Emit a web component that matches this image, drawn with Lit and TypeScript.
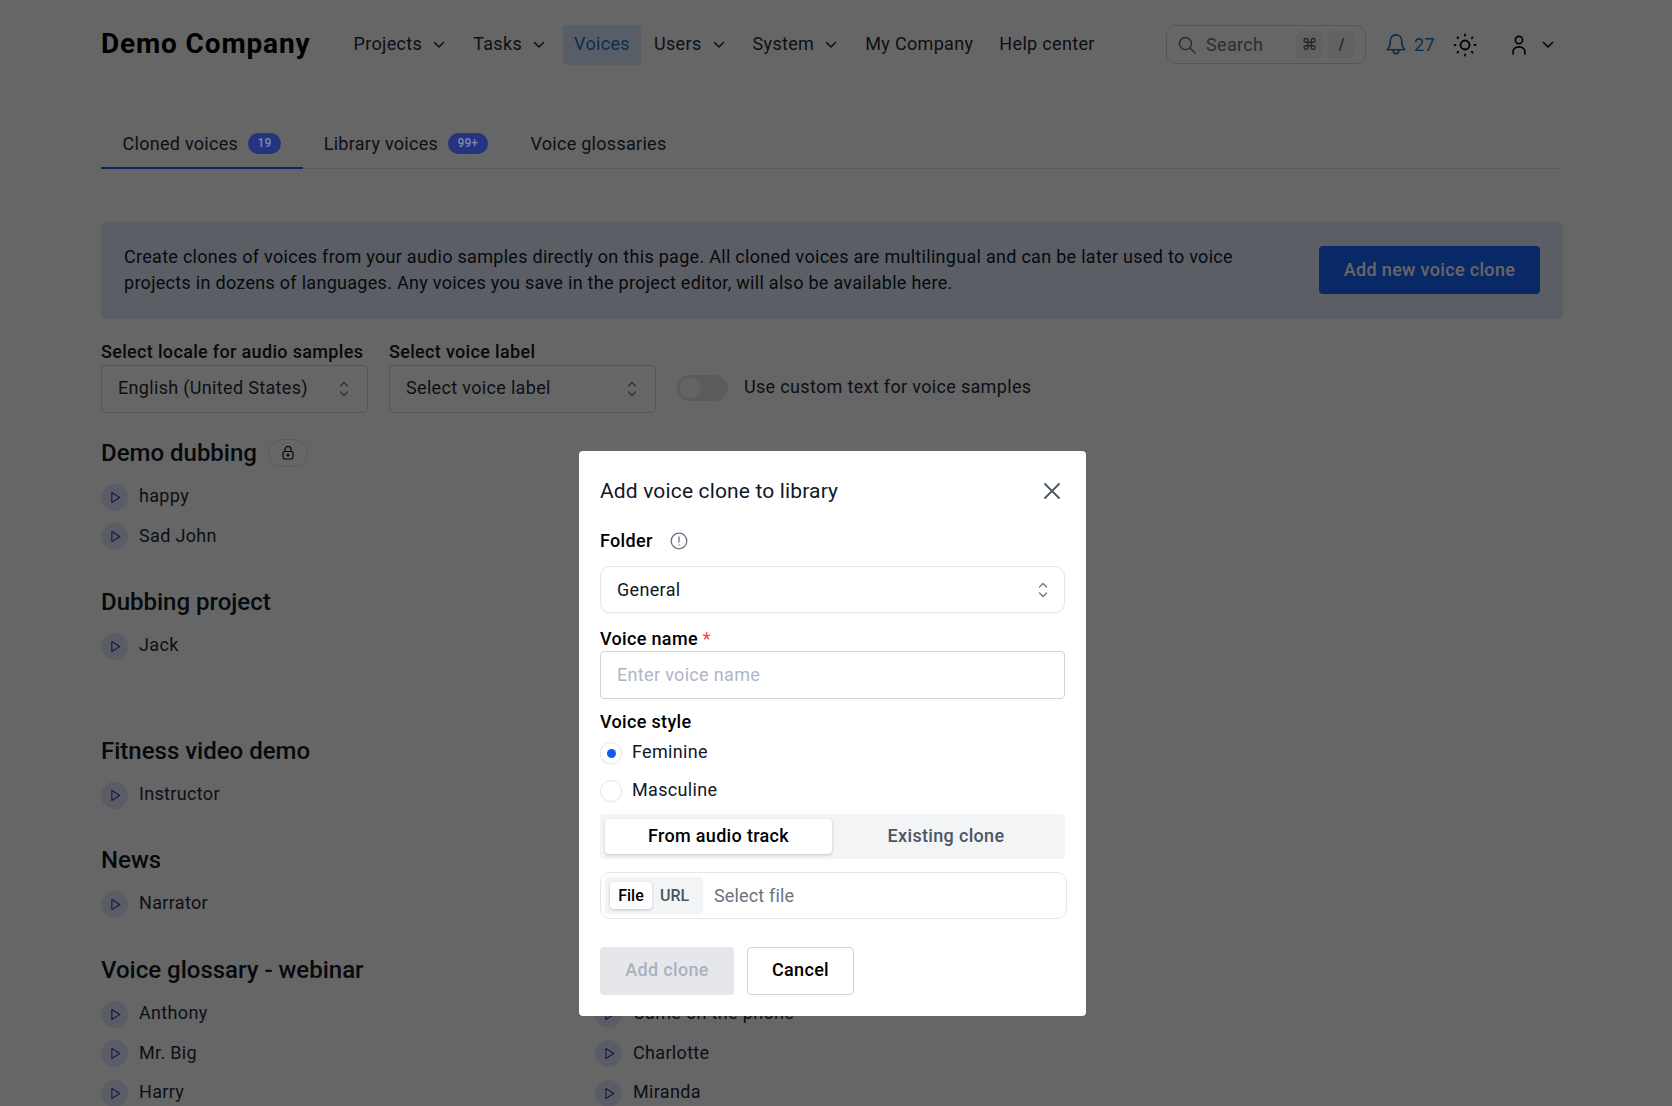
import { LitElement, css, html, svg } from 'lit';
import { customElement } from 'lit/decorators.js';

const chevron = html`<svg class="chev" viewBox="0 0 12 8" fill="none" stroke="currentColor" stroke-width="1.5" stroke-linecap="round" stroke-linejoin="round"><path d="M1.5 1.5 6 6l4.5-4.5"/></svg>`;
const updown = html`<svg class="updown" viewBox="0 0 10 18" fill="none" stroke="currentColor" stroke-width="1.2" stroke-linecap="round" stroke-linejoin="round"><path d="M1.5 6 5 2.5 8.500 6M1.500 12 5 15.500 8.500 12"/></svg>`;
const play = svg`<path d="M1 1v12l9.500-6z" fill="none" stroke="currentColor" stroke-width="1.300" stroke-linejoin="round"/>`;

const sections = [
  { title: 'Demo dubbing', lock: true, cols: [['happy', 'Sad John']] },
  { title: 'Dubbing project', tall: true, cols: [['Jack']] },
  { title: 'Fitness video demo', cols: [['Instructor']] },
  { title: 'News', cols: [['Narrator']] },
  {
    title: 'Voice glossary - webinar',
    cols: [
      ['Anthony', 'Mr. Big', 'Harry'],
      ['Came on the phone', 'Charlotte', 'Miranda'],
    ],
  },
];

@customElement('app-root')
export class AppRoot extends LitElement {
  static styles = css`
    :host {
      display: block;
      position: relative;
      height: 1106px;
      overflow: hidden;
      background: #fff;
      font-family: Roboto, 'Liberation Sans', sans-serif;
      font-size: 18px;
      letter-spacing: 0.33px;
      color: #111827;
    }
    header {
      height: 86px;
      box-sizing: border-box;
      border-bottom: 1px solid #f3f4f6;
      padding: 4px 118px 0 101px;
      display: flex;
      align-items: center;
    }
    .logo {
      font-size: 28px;
      font-weight: 700;
      letter-spacing: 0.85px;
      color: #000;
      width: 242px;
      flex: none;
      white-space: nowrap;
      margin-bottom: 2px;
    }
    nav {
      display: flex;
      align-items: center;
      gap: 3px;
      flex: 1;
      color: #1f2937;
    }
    .nav-item {
      height: 40px;
      padding: 0 10.5px 2px;
      box-sizing: border-box;
      display: flex;
      align-items: center;
      gap: 11px;
      border-radius: 4px;
      white-space: nowrap;
    }
    .nav-item.more {
      padding-right: 14.5px;
    }
    .nav-item.more .chev {
      margin-top: 3px;
    }
    .nav-item.active {
      background: #dbeafe;
      color: #1d6fc4;
      padding-left: 11.5px;
      padding-right: 11.5px;
      margin-right: -1px;
    }
    .nav-item.wide {
      padding-right: 12.5px;
    }
    .chev {
      width: 12px;
      height: 8px;
    }
    .tools {
      display: flex;
      align-items: center;
    }
    .search {
      width: 200px;
      height: 39px;
      box-sizing: border-box;
      border: 1px solid #d1d5db;
      border-radius: 10px;
      display: flex;
      align-items: center;
      padding: 0 10px 0 11px;
      color: #6b7280;
    }
    .search svg {
      width: 18px;
      height: 18px;
      margin-right: 10px;
    }
    .search span.ph {
      flex: 1;
    }
    kbd {
      width: 27px;
      height: 27px;
      margin-left: 5px;
      border-radius: 6px;
      background: #f3f4f6;
      display: flex;
      align-items: center;
      justify-content: center;
      font: 16px 'DejaVu Sans', sans-serif;
      color: #4b5563;
    }
    .bell {
      display: flex;
      align-items: center;
      gap: 8px;
      margin-left: 20px;
      color: #1d6fc4;
    }
    .bell svg {
      width: 20px;
      height: 23px;
    }
    .sun {
      width: 24px;
      height: 24px;
      margin-left: 18px;
      color: #000;
    }
    .user {
      width: 16px;
      height: 20px;
      margin-left: 34px;
      color: #000;
    }
    .tools .chev {
      margin-left: 15px;
      color: #000;
    }

    main {
      padding: 0 109px 0 101px;
    }
    .tabs {
      display: flex;
      height: 82px;
      align-items: flex-end;
      border-bottom: 1px solid #e5e7eb;
    }
    .tab {
      height: 48px;
      padding: 12px 21.5px 0;
      box-sizing: border-box;
      display: flex;
      align-items: flex-start;
      gap: 9.5px;
      color: #1f2937;
      margin-bottom: -1px;
      white-space: nowrap;
      letter-spacing: 0.28px;
    }
    .tab + .tab {
      padding-left: 21px;
    }
    .tab.active {
      border-bottom: 2px solid #1864ff;
    }
    /* the counters sit above the dimming layer in the reference */
    .badge {
      position: relative;
      z-index: 2;
      height: 21px;
      margin-top: 0;
      padding: 0 10px;
      border-radius: 10.5px;
      background: #24347f;
      color: #7f8bb0;
      font-size: 12px;
      font-weight: 500;
      letter-spacing: 0;
      line-height: 21px;
    }
    .banner {
      margin-top: 53px;
      height: 97px;
      box-sizing: border-box;
      background: #e4ecfa;
      border-radius: 4px;
      padding: 0 23px 1px;
      display: flex;
      align-items: center;
      justify-content: space-between;
      line-height: 26px;
      color: #111827;
      letter-spacing: 0.29px;
    }
    .banner p {
      margin: 0;
      width: 1130px;
    }
    .primary {
      width: 221px;
      height: 48px;
      flex: none;
      background: #1864ff;
      color: #fff;
      font-weight: 500;
      letter-spacing: 0.33px;
      border-radius: 4px;
      display: flex;
      align-items: center;
      justify-content: center;
    }
    .filters {
      display: flex;
      align-items: flex-end;
      gap: 21px;
      margin-top: 22px;
    }
    .field-label {
      font-weight: 500;
      line-height: 21px;
    }
    .select {
      width: 267px;
      height: 48px;
      margin-top: 3px;
      box-sizing: border-box;
      border: 1px solid #d1d5db;
      border-radius: 4px;
      padding: 0 18px 0 16px;
      display: flex;
      align-items: center;
      justify-content: space-between;
      color: #1f2937;
    }
    .select span {
      margin-bottom: 3px;
    }
    .updown {
      width: 10px;
      height: 18px;
      color: #6b7280;
    }
    .toggle-row {
      display: flex;
      align-items: center;
      gap: 16px;
      height: 50px;
      color: #1f2937;
    }
    .toggle-row span.label {
      margin-bottom: 3px;
    }
    .toggle {
      width: 51px;
      height: 26px;
      border-radius: 13px;
      background: #e5e7eb;
      position: relative;
    }
    .toggle::after {
      content: '';
      position: absolute;
      left: 3px;
      top: 3px;
      width: 20px;
      height: 20px;
      border-radius: 50%;
      background: #f9fafb;
    }

    section {
      margin-top: 22px;
      height: 128px;
    }
    section + section {
      margin-top: 21px;
    }
    section:last-child {
      margin-top: 22px;
    }
    section.one {
      height: 88px;
    }
    section h2 {
      margin: 0;
      font-size: 24px;
      font-weight: 500;
      letter-spacing: 0;
      line-height: 36px;
      color: #111827;
      display: flex;
      align-items: center;
      gap: 11px;
    }
    .lock {
      width: 40px;
      height: 28px;
      box-sizing: border-box;
      border: 1px solid #e5e7eb;
      border-radius: 14px;
      display: flex;
      align-items: center;
      justify-content: center;
      color: #000;
    }
    .lock svg {
      width: 12px;
      height: 14px;
    }
    .cols {
      display: grid;
      grid-template-columns: repeat(3, 494px);
      margin-top: 6.5px;
    }
    .row {
      height: 39.5px;
      display: flex;
      align-items: center;
      gap: 11px;
      color: #1f2937;
      white-space: nowrap;
    }
    .row .name {
      margin-bottom: 3px;
    }
    .play {
      width: 27px;
      height: 27px;
      border-radius: 50%;
      background: #e0e7ff;
      color: #2541b2;
      display: flex;
      align-items: center;
      justify-content: center;
      flex: none;
    }
    .play svg {
      width: 10px;
      height: 13px;
      margin-left: 2px;
    }

    .overlay {
      position: absolute;
      z-index: 1;
      inset: 0;
      background: rgba(0, 0, 0, 0.6);
    }
    .modal {
      position: absolute;
      z-index: 3;
      left: 579px;
      top: 451px;
      width: 507px;
      height: 565px;
      box-sizing: border-box;
      background: #fff;
      border-radius: 4px;
      padding: 22px 21px 21px;
      color: #111827;
    }
    .modal-head {
      display: flex;
      justify-content: space-between;
      align-items: center;
      height: 36px;
    }
    .modal-head span {
      font-size: 21px;
      letter-spacing: 0.15px;
    }
    .modal-head svg {
      width: 18px;
      height: 18px;
      margin-right: 4px;
      color: #4b5563;
    }
    .folder {
      display: flex;
      align-items: center;
      gap: 17px;
      margin-top: 19px;
      height: 24px;
      font-weight: 500;
      color: #000;
    }
    .folder svg {
      width: 18px;
      height: 18px;
      margin-top: 2px;
      color: #6b7280;
    }
    .m-select {
      margin-top: 14px;
      height: 47px;
      box-sizing: border-box;
      border: 1px solid #e5e7eb;
      border-radius: 10px;
      box-shadow: 0 1px 2px rgba(0, 0, 0, 0.05);
      padding: 0 16px;
      display: flex;
      align-items: center;
      justify-content: space-between;
    }
    .m-label {
      font-weight: 500;
      color: #000;
      line-height: 24px;
    }
    .m-label b {
      color: #ef4444;
      font-weight: 400;
    }
    .m-label.name {
      margin-top: 14px;
    }
    .m-input {
      height: 48px;
      box-sizing: border-box;
      border: 1px solid #cbd5e1;
      border-radius: 4px;
      padding: 0 16px 2px;
      display: flex;
      align-items: center;
      color: #aeb6c4;
    }
    .m-label.style {
      margin-top: 11px;
      margin-bottom: -1px;
    }
    .radio {
      display: flex;
      align-items: center;
      gap: 10px;
      height: 38px;
    }
    .radio span:last-child {
      margin-bottom: 2px;
    }
    .dot {
      width: 22px;
      height: 22px;
      margin-top: 2px;
      box-sizing: border-box;
      border: 1px solid #e5e7eb;
      border-radius: 50%;
      display: flex;
      align-items: center;
      justify-content: center;
      box-shadow: 0 1px 2px rgba(0, 0, 0, 0.05);
    }
    .dot.on::after {
      content: '';
      width: 9px;
      height: 9px;
      border-radius: 50%;
      background: #0f5ef0;
    }
    .seg {
      margin-top: 5px;
      height: 45px;
      box-sizing: border-box;
      background: #f3f4f6;
      border-radius: 4px;
      padding: 5px;
      display: grid;
      grid-template-columns: 227px 1fr;
      text-align: center;
      font-weight: 500;
      line-height: 34px;
      color: #4b5563;
    }
    .seg .on {
      background: #fff;
      color: #000;
      border-radius: 4px;
      box-shadow: 0 1px 3px rgba(0, 0, 0, 0.2);
    }
    .file {
      margin-top: 13px;
      width: 467px;
      height: 47px;
      box-sizing: border-box;
      border: 1px solid #e5e7eb;
      border-radius: 10px;
      padding: 4px;
      display: flex;
      align-items: center;
      gap: 11px;
      color: #6b7280;
      letter-spacing: 0.15px;
    }
    .file-seg {
      height: 37px;
      width: 98px;
      box-sizing: border-box;
      background: #f3f4f6;
      border-radius: 4px;
      padding: 5px;
      display: flex;
      align-items: center;
      gap: 8px;
      font-size: 16px;
      font-weight: 500;
      letter-spacing: 0;
      color: #4b5563;
    }
    .file-seg .on {
      width: 42px;
      height: 27px;
      background: #fff;
      color: #000;
      border-radius: 4px;
      box-shadow: 0 1px 3px rgba(0, 0, 0, 0.2);
      display: flex;
      align-items: center;
      justify-content: center;
    }
    .actions {
      display: flex;
      gap: 13px;
      margin-top: 28px;
      font-weight: 500;
    }
    .actions div {
      height: 48px;
      padding-bottom: 4px;
      box-sizing: border-box;
      border-radius: 4px;
      display: flex;
      align-items: center;
      justify-content: center;
    }
    .add {
      width: 134px;
      background: #e5e7eb;
      color: #a9b2bf;
    }
    .cancel {
      width: 107px;
      border: 1px solid #cbd5e1;
      color: #000;
    }
  `;

  renderSection(s: any) {
    const klass = s.tall ? 'tall' : s.cols[0].length === 1 ? 'one' : '';
    return html`<section class=${klass}>
      <h2>
        ${s.title}
        ${s.lock
          ? html`<span class="lock"><svg viewBox="0 0 12 14" fill="none" stroke="currentColor" stroke-width="1.100"><rect x="1" y="5.500" width="10" height="7.500" rx="1.500"/><path d="M3 5.500V3.500a3 3 0 0 1 6 0v2"/><circle cx="6" cy="9.200" r=".8" fill="currentColor"/></svg></span>`
          : ''}
      </h2>
      <div class="cols">
        ${s.cols.map(
          (c: string[]) => html`<div>
            ${c.map(
              (name) => html`<div class="row">
                <span class="play"><svg viewBox="0 0 12 14">${play}</svg></span><span class="name">${name}</span>
              </div>`,
            )}
          </div>`,
        )}
      </div>
    </section>`;
  }

  render() {
    return html`
      <header>
        <div class="logo">Demo Company</div>
        <nav>
          <div class="nav-item more">Projects ${chevron}</div>
          <div class="nav-item more">Tasks ${chevron}</div>
          <div class="nav-item active">Voices</div>
          <div class="nav-item more">Users ${chevron}</div>
          <div class="nav-item more">System ${chevron}</div>
          <div class="nav-item wide">My Company</div>
          <div class="nav-item">Help center</div>
        </nav>
        <div class="tools">
          <div class="search">
            <svg viewBox="0 0 18 18" fill="none" stroke="currentColor" stroke-width="1.500" stroke-linecap="round"><circle cx="7.500" cy="7.500" r="6"/><path d="m12 12 5 5"/></svg>
            <span class="ph">Search</span>
            <kbd>⌘</kbd><kbd>/</kbd>
          </div>
          <div class="bell">
            <svg viewBox="0 0 20 24" fill="none" stroke="currentColor" stroke-width="1.700" stroke-linecap="round" stroke-linejoin="round"><path d="M10 2c-3.600 0-6 2.800-6 6.500 0 4.500-1 6.500-3 9h18c-2-2.500-3-4.500-3-9C16 4.800 13.600 2 10 2z"/><path d="M7 18c0 2.200 1.300 3.500 3 3.500s3-1.300 3-3.500"/></svg>
            27
          </div>
          <svg class="sun" viewBox="0 0 24 24" fill="none" stroke="currentColor" stroke-width="1.800" stroke-linecap="round"><circle cx="12" cy="12" r="4.500"/><path d="M12 1.500v1M12 21.500v1M1.500 12h1M21.500 12h1M4.500 4.500l.7.7M18.800 18.800l.7.7M4.500 19.500l.7-.7M18.800 5.200l.7-.7"/></svg>
          <svg class="user" viewBox="0 0 16 22" fill="none" stroke="currentColor" stroke-width="1.800" stroke-linecap="round"><circle cx="8" cy="5.500" r="4"/><path d="M1.500 21v-3a6.500 5 0 0 1 13 0v3"/></svg>
          ${chevron}
        </div>
      </header>
      <main>
        <div class="tabs">
          <div class="tab active">Cloned voices <span class="badge">19</span></div>
          <div class="tab">Library voices <span class="badge">99+</span></div>
          <div class="tab">Voice glossaries</div>
        </div>
        <div class="banner">
          <p>Create clones of voices from your audio samples directly on this page. All cloned voices are multilingual and can be later used to voice projects in dozens of languages. Any voices you save in the project editor, will also be available here.</p>
          <div class="primary">Add new voice clone</div>
        </div>
        <div class="filters">
          <div>
            <div class="field-label">Select locale for audio samples</div>
            <div class="select"><span>English (United States)</span> ${updown}</div>
          </div>
          <div>
            <div class="field-label">Select voice label</div>
            <div class="select"><span>Select voice label</span> ${updown}</div>
          </div>
          <div class="toggle-row"><span class="toggle"></span><span class="label">Use custom text for voice samples</span></div>
        </div>
        ${sections.map((s) => this.renderSection(s))}
      </main>
      <div class="overlay"></div>
      <div class="modal">
        <div class="modal-head">
          <span>Add voice clone to library</span>
          <svg viewBox="0 0 18 18" fill="none" stroke="currentColor" stroke-width="1.800" stroke-linecap="round"><path d="m2 2 14 14M16 2 2 16"/></svg>
        </div>
        <div class="folder">
          Folder
          <svg viewBox="0 0 18 18" fill="none" stroke="currentColor" stroke-width="1.300" stroke-linecap="round"><circle cx="9" cy="9" r="7.800"/><path d="M9 5v5M9 12.800v.2"/></svg>
        </div>
        <div class="m-select">General ${updown}</div>
        <div class="m-label name">Voice name <b>*</b></div>
        <div class="m-input">Enter voice name</div>
        <div class="m-label style">Voice style</div>
        <div class="radio"><span class="dot on"></span><span>Feminine</span></div>
        <div class="radio"><span class="dot"></span><span>Masculine</span></div>
        <div class="seg"><div class="on">From audio track</div><div>Existing clone</div></div>
        <div class="file">
          <div class="file-seg"><div class="on">File</div><div>URL</div></div>
          Select file
        </div>
        <div class="actions"><div class="add">Add clone</div><div class="cancel">Cancel</div></div>
      </div>
    `;
  }
}
